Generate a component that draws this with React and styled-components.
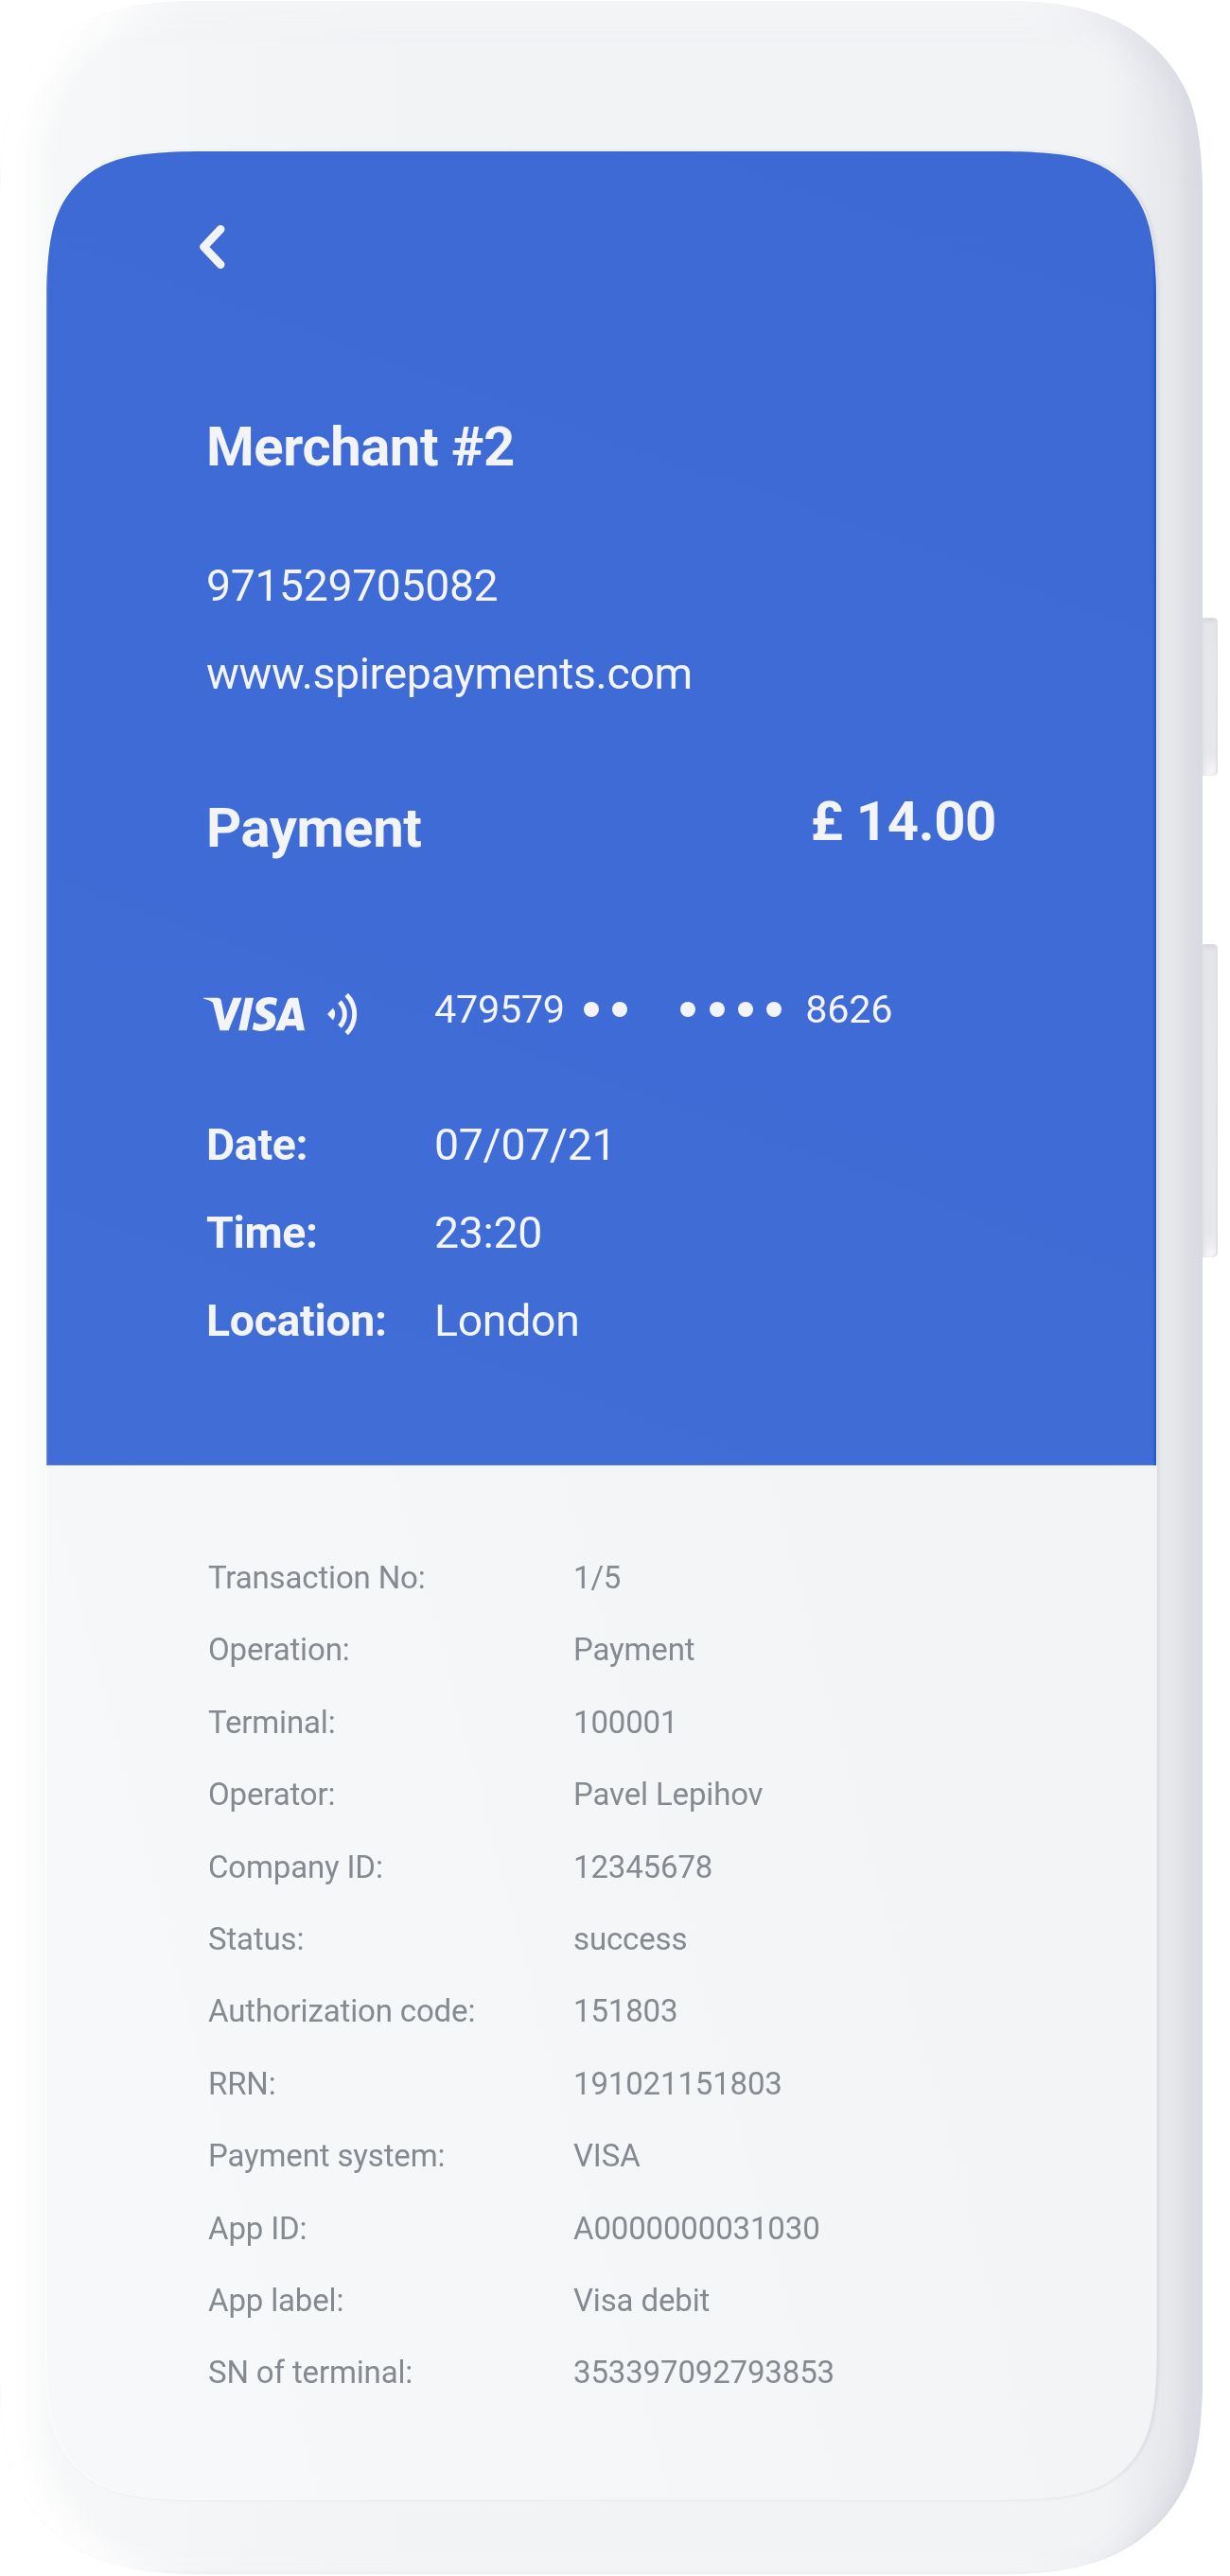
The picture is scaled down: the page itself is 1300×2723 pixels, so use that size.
import React from "react";
import styled, { createGlobalStyle } from "styled-components";
import { SiVisa } from "react-icons/si";

const GlobalStyle = createGlobalStyle`
  body {
    margin: 0;
    background: #fff;
    font-family: Roboto, "Liberation Sans", sans-serif;
  }
`;

/* Continuous-curvature corners, listed clockwise from the top left. */
const bodyPath = (w, h) => `path("M0 215 C0 125 13 87 46 54 C81 19 126 0 211 0 H${w - 211}
  C${w - 126} 0 ${w - 81} 19 ${w - 46} 54 C${w - 13} 87 ${w} 125 ${w} 215 V${h - 215}
  C${w} ${h - 125} ${w - 13} ${h - 87} ${w - 46} ${h - 54} C${w - 81} ${h - 19} ${w - 126} ${h} ${w - 211} ${h}
  H211 C126 ${h} 81 ${h - 19} 46 ${h - 54} C13 ${h - 87} 0 ${h - 125} 0 ${h - 215} Z")`.replace(/\s+/g, " ");

const screenPath = (w, h) => `path("M0 165 C0 90 8 59 34 33 C61 7 91 0 171 0 H${w - 171}
  C${w - 91} 0 ${w - 61} 7 ${w - 34} 33 C${w - 8} 59 ${w} 90 ${w} 165 V${h - 165}
  C${w} ${h - 90} ${w - 8} ${h - 59} ${w - 34} ${h - 33} C${w - 61} ${h - 7} ${w - 91} ${h} ${w - 171} ${h}
  H171 C91 ${h} 61 ${h - 7} 34 ${h - 33} C8 ${h - 59} 0 ${h - 90} 0 ${h - 165} Z")`.replace(/\s+/g, " ");

const Stage = styled.main`
  display: flex;
  width: 1300px;
  height: 2723px;
  overflow: hidden;
`;

const Phone = styled.div`
  box-sizing: border-box;
  width: 1271px;
  height: 2720px;
  margin-top: 1px;
  padding: 158px 48px 0 48px;
  border-radius: 170px;
  background: linear-gradient(to right, #f6f7f8 40px, #f2f3f5 420px, #f2f3f5 1170px, #e9eaed 1222px, #e7e8eb 1245px, #e2e3e7 1254px, #e4e5e9 1271px);
  box-shadow:
    inset 36px 4px 34px #fff,
    inset 0 -2px 3px rgba(214, 216, 226, 0.6),
    inset -17px 15px 36px -17px rgba(180, 182, 200, 0.55),
    inset 0 24px 30px -6px rgba(250, 251, 252, 0.8),
    inset -10px -4px 26px -8px rgba(205, 207, 218, 0.3);
  clip-path: ${bodyPath(1271, 2720)};
`;

const ScreenShadow = styled.div`
  filter: drop-shadow(2px 0 1.5px rgba(175, 178, 195, 0.3));
`;

const Bezel = styled.div`
  box-sizing: border-box;
  width: 1175px;
  height: 2484px;
  padding: 1px;
  background: linear-gradient(to right, #fdfdfe, #f2f3f5 30%, #eff0f3);
  clip-path: ${screenPath(1175, 2484)};
`;

const Screen = styled.div`
  display: flex;
  flex-direction: column;
  width: 1173px;
  height: 2482px;
  background: linear-gradient(75deg, #f7f8f9 10%, #f4f5f7 50%, #f2f3f5 85%);
  clip-path: ${screenPath(1173, 2482)};
`;

const Summary = styled.header`
  box-sizing: border-box;
  flex: none;
  height: 1389px;
  padding: 77px 169px 0 169px;
  color: #f3f4f7;
  background: linear-gradient(200deg, #3d69d5, #3f6bd6 50%, #416dd7);
  box-shadow:
    inset -3px 0 3px -1px #1f52cb,
    inset 2px 0 2px -1px #7092e2,
    inset 0 -1px 0 #5b81df;
`;

const BackButton = styled.button`
  display: block;
  width: 30px;
  height: 48px;
  margin: 0 0 157px -10px;
  padding: 0;
  border: 0;
  background: none;
  color: inherit;
`;

const Heading = styled.h1`
  margin: 0;
  font-size: 58px;
  font-weight: 700;
  line-height: 60px;
  letter-spacing: -0.45px;
  white-space: nowrap;
`;

const Contact = styled.div`
  margin-top: 71px;
  font-size: 46.4px;
  line-height: 93px;
  letter-spacing: -0.38px;
`;

const TotalRow = styled.div`
  display: flex;
  justify-content: space-between;
  align-items: flex-start;
  height: 67px;
  margin-top: 79px;
`;

const Amount = styled(Heading).attrs({ as: "strong" })`
  letter-spacing: -0.35px;
`;

const Title = styled(Heading).attrs({ as: "h2" })`
  padding-top: 7px;
`;

const CardRow = styled.div`
  display: flex;
  align-items: flex-start;
  height: 54px;
  margin-top: 137px;
`;

const Brand = styled.div`
  display: flex;
  align-items: center;
  width: 244px;
  height: 46px;
  margin: 7px 0 0 -3px;

  svg + svg {
    margin-left: 19px;
  }
`;

const VisaMark = styled(SiVisa).attrs({ viewBox: "0 8.1 24 7.8", preserveAspectRatio: "none" })`
  width: 107px;
  height: 36px;
`;

const CardNumber = styled.div`
  display: flex;
  font-size: 41.4px;
  line-height: 50px;
  letter-spacing: -0.3px;
`;

const Dots = styled.span`
  display: flex;
  align-items: center;
  gap: 14.4px;
  margin-left: ${(p) => p.$before}px;
`;

const Dot = styled.i`
  width: 16px;
  height: 16px;
  border-radius: 50%;
  background: currentColor;
`;

const LastDigits = styled.span`
  margin-left: 25px;
`;

const Facts = styled.dl`
  display: grid;
  grid-template-columns: 241px 1fr;
  grid-auto-rows: 93px;
  margin: 68px 0 0;
  font-size: 46.4px;
  line-height: 93px;
  letter-spacing: -0.3px;

  dt {
    font-weight: 700;
  }

  dd {
    margin: 0;
  }
`;

const Details = styled.dl`
  display: grid;
  grid-template-columns: 386px 1fr;
  grid-auto-rows: 76.4px;
  margin: 81px 0 0;
  padding: 0 100px 0 171px;
  color: #858a91;
  font-size: 33px;
  line-height: 76.4px;
  letter-spacing: -0.15px;

  dt,
  dd {
    margin: 0;
    white-space: nowrap;
  }
`;

const Rail = styled.div`
  display: flex;
  flex-direction: column;
  gap: 178px;
  padding-top: 653px;
`;

const SideKey = styled.div`
  width: 16px;
  height: ${(p) => p.$length}px;
  border-radius: 0 5px 5px 0;
  background: linear-gradient(to bottom, #d3d4de 0, #e5e6ea 7px, #e7e8ec calc(100% - 24px), #f6f6f8 100%);
  box-shadow: inset -2px 0 2px #dfe0e5, inset 4px 0 4px -2px #e0e1e6;
`;

const Chevron = () => (
  <svg width="30" height="48" viewBox="0 0 30 48" fill="none" stroke="currentColor" strokeWidth="8.6" strokeLinecap="round" strokeLinejoin="round">
    <path d="M25.2 5.3 L7.5 24 L25.2 42.7" />
  </svg>
);

const Contactless = () => (
  <svg width="40" height="46" viewBox="0 0 40 46" fill="none" stroke="currentColor" strokeWidth="5">
    <path d="M5 23 L11 16.6 Q15.4 23 11 29.4 Z" fill="currentColor" stroke="none" />
    <path d="M17.9 9.9 A18.5 18.5 0 0 1 17.9 36.1" />
    <path d="M25.2 2.5 A29 29 0 0 1 25.2 43.5" />
  </svg>
);

const DotGroup = ({ count, before }) => (
  <Dots $before={before}>
    {Array.from({ length: count }, (_, i) => (
      <Dot key={i} />
    ))}
  </Dots>
);

const Pairs = ({ rows }) =>
  rows.map(([label, value]) => (
    <React.Fragment key={label}>
      <dt>{label}:</dt>
      <dd>{value}</dd>
    </React.Fragment>
  ));

const facts = [
  ["Date", "07/07/21"],
  ["Time", "23:20"],
  ["Location", "London"],
];

const details = [
  ["Transaction No", "1/5"],
  ["Operation", "Payment"],
  ["Terminal", "100001"],
  ["Operator", "Pavel Lepihov"],
  ["Company ID", "12345678"],
  ["Status", "success"],
  ["Authorization code", "151803"],
  ["RRN", "191021151803"],
  ["Payment system", "VISA"],
  ["App ID", "A0000000031030"],
  ["App label", "Visa debit"],
  ["SN of terminal", "353397092793853"],
];

export default function App() {
  return (
    <Stage>
      <GlobalStyle />
      <Phone>
        <ScreenShadow>
          <Bezel>
            <Screen>
              <Summary>
                <BackButton aria-label="Back">
                  <Chevron />
                </BackButton>
                <Heading>Merchant #2</Heading>
                <Contact>
                  <div>971529705082</div>
                  <div>www.spirepayments.com</div>
                </Contact>
                <TotalRow>
                  <Title>Payment</Title>
                  <Amount>£ 14.00</Amount>
                </TotalRow>
                <CardRow>
                  <Brand>
                    <VisaMark />
                    <Contactless />
                  </Brand>
                  <CardNumber>
                    479579
                    <DotGroup count={2} before={20} />
                    <DotGroup count={4} before={56} />
                    <LastDigits>8626</LastDigits>
                  </CardNumber>
                </CardRow>
                <Facts>
                  <Pairs rows={facts} />
                </Facts>
              </Summary>
              <Details>
                <Pairs rows={details} />
              </Details>
            </Screen>
          </Bezel>
        </ScreenShadow>
      </Phone>
      <Rail>
        <SideKey $length={167} />
        <SideKey $length={331} />
      </Rail>
    </Stage>
  );
}
